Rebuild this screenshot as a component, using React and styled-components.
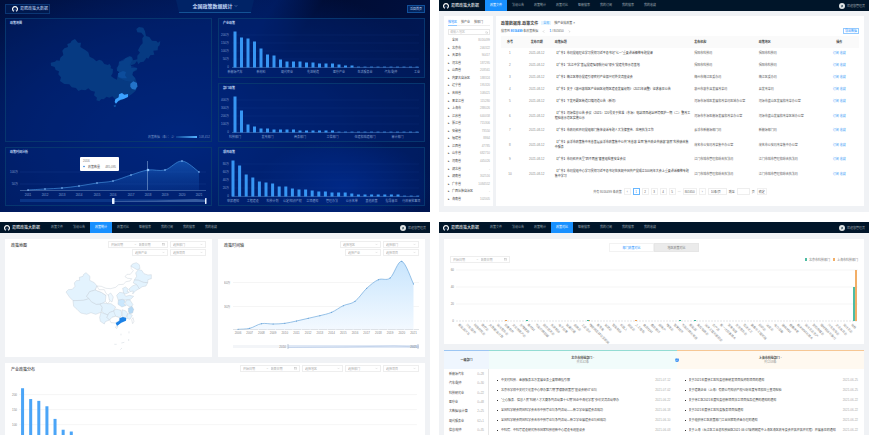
import React, { useState } from 'react';
import styled, { createGlobalStyle } from 'styled-components';
import { ChevronDown, ChevronLeft, ChevronRight, Calendar, Search } from 'lucide-react';

const navItems = ['政策文件', '法规公告', '政策统计', '政策对比', '智能搜索', '我的订阅', '我的搜索', '我的收藏'];

const regions = [
    ['全国', '8016499'], ['北京市', '246322'], ['天津市', '90417'], ['河北省', '187295'],
    ['山西省', '203561'], ['内蒙古自治区', '188324'], ['辽宁省', '195320'], ['吉林省', '108421'],
    ['黑龙江省', '115280'], ['上海市', '288026'], ['江苏省', '640058'], ['浙江省', '715306'],
    ['安徽省', '73550'], ['福建省', '8864'], ['江西省', '47785'], ['山东省', '682710'],
    ['河南省', '445026'], ['湖北省', '-'], ['湖南省', '302516'], ['广东省', '1084552'],
    ['广西壮族自治区', '-'], ['海南省', '102005'],
];

const policies = [
    ['【广东】市局党组理论学习贯彻习近平总书记“七一”重要讲话精神专题党课', '揭阳市科技局', '揭阳市科技局'],
    ['【广东】“北江中学”基层党建强领航行动“领头”党建先锋示范基地', '揭阳市科技局', '揭阳市科技局'],
    ['【广东】梅江区举办党建引领农村产业振兴对外交流座谈会', '梅州市梅江区委办局', '梅江区委办局'],
    ['【广东】关于《惠州惠城区产业园区规划区建设发展规划》（2021年调整）征求意见公告', '惠州市惠东县发展改革局', '县发改革局'],
    ['【广东】下发丹霞区街道口镇河道公告（新河）', '河源市源城区发展和改革局区域办公室', '河源市蓝山区发展和改革办公室'],
    ['【广东】河源信息公告 会议（2021）120号关于批准（东源）电站项目选址环境保护一期（二）整改工程验收示范区实施公示', '河源市东源区能源发展和改革办公室', '河源市蓝山发展和改革区域办公室'],
    ['【广东】市政局召开局党组部门集体谈话专题人大法律宣传、应用执法工作', '云浮市新能源部门局', '新能源部门局'],
    ['【广东】云浮市政策集中改善基层云浮市政策集中公共“改善惠 全面”集中政企共融惠“惠民”科技融合集中服务', '茂名市公安局改革集中办公室', '茂名市公安局改革集中办公室'],
    ['【广东】市局召开天里“四不两直”督查组检查安全会议', '江门市城市管理和综合执法局', '江门市城市管理和综合执法局'],
    ['【广东】市局党组中心学习贯彻习近平总书记在庆祝中国共产党成立100周年大会上重要讲话精神专题集中学习', '江门市城市管理和综合执法局', '江门市城市管理和综合执法局'],
];

const industries = [
    ['新能源汽车', '0+28'], ['汽车/配件', '0+30'], ['科技研究业', '0+22'], ['医疗业', '0+48'],
    ['大数据/云计算', '2+25'], ['现代服务业', '62+1'], ['信息/软件', '0+35'],
];

const beijing = [
    ['中关村科技、金融服务北方发展业务重要联络指引解', '2021-07-12'],
    ['北京市学校中关村文化基中心举办第六期“罗德斯政策官”座谈会研讨”论坛', '2021-07-02'],
    ['“重心服务、信息人民”科研人才大赛系列活动第十七期“国企中海化学者”参访交流活动举办', '2021-06-22'],
    ['全国科学研会同国科学会合市中技厅论坛系列活动——新华学业展建会活成功', '2021-06-18'],
    ['全国科学研会同国科学会合市中技厅论坛系列活动—新华学业展建会论坛经成功', '2021-06-10'],
    ['中科院、中科厅建设研究所市国家科技创新中心建设专题座谈会', '2021-06-03'],
];

const shanghai = [
    ['关于2021年度徐汇区科委创新研发项目拟资助项目的通知', '2021-06-25'],
    ['关于建筑企业（上海）有限公司知识产权纠纷年度专项和应重查询检验', '2021-06-25'],
    ['关于徐汇区2021年度科委创新项目扶立项目拟及运费的通知的通知', '2021-06-22'],
    ['关于2021年度徐汇区科委服务项目拟通知', '2021-06-22'],
    ['关于组织徐汇区政策部门工业国家助资金办理的通知', '2021-06-22'],
    ['关于上海（长江区工业总科技园区2021·06·07采购网建中上海区海区政专委会开拓开拓开究程）开展意见的通知', '2021-06-22'],
];

const industryBars = [36, 30, 29, 26, 19, 13, 12, 8, 6, 6, 6, 5, 5, 4, 4, 4, 3, 2, 2, 1, 1, 1, 1, 1, 1, 1, 1, 1, 1];
const deptBars = [36, 22, 8, 6, 4, 4, 3, 3, 3, 3, 2, 2, 2, 2, 2, 2, 1, 1, 1, 1, 1, 1, 1, 1, 1, 1, 1, 1, 1];
const topicBars = [36, 31, 22, 19, 15, 14, 13, 10, 10, 8, 7, 7, 6, 5, 5, 4, 4, 4, 3, 2, 2, 2, 2, 2, 2, 2, 1, 1, 1];

const compareLabels = [
    '新能源汽车', '汽车/配件', '科技研究业', '医疗业', '大数据/云计算', '现代服务业', '信息软件', '文化创意产业', '生物医药', '新材料',
    '节能环保低碳', '航空航天业', '先进制造', '电子信息', '轨道交通', '金融业', '工业设计', '物联网及移动互联网', '新零售', '旅游业',
    '智能制造', '机器人', '航运业', '人工智能', '食品饮料', '教育培训', '房地产', '物流业', '智慧城市', '节能环保与资源',
    '新能源', '集成电路业', '海洋工程与船舶业', '农产品', '新一代信息技术', '家用电器', '生活服务业', '石油化工', '装备与工程机械', '纺织业',
    '冶金业', '电力设备', '建筑材料', '健康养老', '纳米材料与技术', '现代农业生产', '影视传媒业', '增材制造与激光', '汽车充电业', '文化体育业', '现代农业', '其他',
];

// smooth curve through the points
function curve(points) {
    let d = `M${points[0][0]} ${points[0][1]}`;
    for (let i = 0; i < points.length - 1; i++) {
        const a = points[i - 1] || points[i];
        const b = points[i];
        const c = points[i + 1];
        const e = points[i + 2] || c;
        d += `C${b[0] + (c[0] - a[0]) / 6} ${b[1] + (c[1] - a[1]) / 6} ${c[0] - (e[0] - b[0]) / 6} ${c[1] - (e[1] - b[1]) / 6} ${c[0]} ${c[1]}`;
    }
    return d;
}

function Logo() {
    return (
        <LogoIcon viewBox="0 0 18 18" aria-hidden="true">
            <path d="M5 16C-1 10 2 2 9 2s10 8 4 14" fill="none" stroke="#fff" strokeWidth="3.5" />
            <path d="M9 9v5" stroke="#5d86c4" strokeWidth="2" />
        </LogoIcon>
    );
}

function NavBar({ active }) {
    return (
        <Nav>
            <Brand>
                <Logo />
                易聘政策大数据
            </Brand>
            <NavList>
                {navItems.map((item, i) => (
                    <NavLink key={item} href="#" $active={i === active}>{item}</NavLink>
                ))}
            </NavList>
            <User>
                <Avatar viewBox="0 0 12 12" aria-hidden="true">
                    <circle cx="6" cy="6" r="6" fill="#dfe3e4" />
                    <path d="M4 5l4-1v3l-3 2z" fill="#4d6572" />
                </Avatar>
                欢迎您管理员
            </User>
        </Nav>
    );
}

function DateRange() {
    return (
        <DateBox>
            <input aria-label="开始日期" placeholder="开始日期" />
            <span>~</span>
            <input aria-label="结束日期" placeholder="结束日期" />
            <Calendar size={3} />
        </DateBox>
    );
}

function Filter({ text, wide }) {
    return (
        <SelectBox $wide={wide}>
            <select aria-label={text}>
                <option>{text}</option>
            </select>
            <ChevronDown size={3} />
        </SelectBox>
    );
}

function DarkBars({ title, bars, start, pitch, step, ticks, labels }) {
    return (
        <DarkCard>
            <DarkTitle>{title}</DarkTitle>
            <Chart viewBox="0 0 205 51">
                {ticks.map((t, i) => (
                    <g key={i}>
                        <line x1="13" x2="200" y1={10 + i * 8} y2={10 + i * 8} stroke="#1b4797" strokeWidth=".3" opacity=".6" />
                        <text x="10" y={11 + i * 8} textAnchor="end" fill="#7f9cce">{t}</text>
                    </g>
                ))}
                <line x1="13" x2="200" y1="42.5" y2="42.5" stroke="#547dbb" strokeWidth=".5" />
                {bars.map((h, i) => (
                    <rect key={i} x={start + i * pitch - 1.5} y={42.5 - h} width="3" height={h} fill="#3796f3" opacity={h < 2 ? 0.65 : 1} />
                ))}
                {labels.map((l, i) => (
                    <text key={i} x={start + i * step * pitch} y="48" textAnchor="middle" fill="#86a2d1">{l}</text>
                ))}
            </Chart>
        </DarkCard>
    );
}

const darkPoints = [[22, 36], [39, 35], [56, 34], [73, 32], [91, 29], [107, 27], [125, 21], [142, 16], [159, 16], [176, 7], [193, 18]];

function DarkTrend() {
    return (
        <DarkCard>
            <DarkTitle>政策时间分析</DarkTitle>
            <Chart viewBox="0 0 205 51">
                <defs>
                    <linearGradient id="darkArea" x1="0" y1="0" x2="0" y2="1">
                        <stop offset="0" stopColor="#2074d8" stopOpacity=".5" />
                        <stop offset="1" stopColor="#1456b8" stopOpacity=".2" />
                    </linearGradient>
                </defs>
                <text x="12" y="19" textAnchor="end" fill="#7f9cce">100万</text>
                <text x="12" y="31" textAnchor="end" fill="#7f9cce">50万</text>
                <path d="M14 18H200M14 30H200" stroke="#1b4797" strokeWidth=".3" />
                <path d={`${curve(darkPoints)}L193 36L22 36Z`} fill="url(#darkArea)" />
                <path d={curve(darkPoints)} fill="none" stroke="#4b9ce8" strokeWidth=".6" />
                <path d="M14 36.5H200" stroke="#6e94c7" strokeWidth=".5" />
                <path d="M141.5 7V36" stroke="#9abbe3" strokeWidth=".5" />
                {darkPoints.map(([x, y], i) => <circle key={x} cx={x} cy={y} r={i === 7 ? 1.3 : 0.8} fill="#8fc5ff" />)}
                {darkPoints.map(([x], i) => <text key={x} x={x} y="42" textAnchor="middle" fill="#86a2d1">{2011 + i}</text>)}
                <rect x="14" y="45" width="186" height="3" fill="#0b3586" />
                <path d="M107 48V47L150 46.5L190 45L200 46V48Z" fill="#365b9f" />
                <rect x="106" y="44" width="2.5" height="6" rx=".4" fill="#e8f1ff" />
                <rect x="199" y="44" width="1.5" height="6" rx=".4" fill="#e8f1ff" />
                <rect x="74" y="3" width="39" height="14" rx="1" fill="#fff" />
                <text x="77" y="8" fill="#777">2016</text>
                <circle cx="78" cy="12.5" r=".8" fill="#217de1" />
                <text x="82" y="13.5" fill="#555">政策数量</text>
                <text x="110" y="13.5" textAnchor="end" fill="#777">485,095</text>
            </Chart>
        </DarkCard>
    );
}

function DarkMap() {
    return (
        <DarkCard $tall>
            <DarkTitle>政策地图</DarkTitle>
            <Chart viewBox="0 0 205 116">
                <defs>
                    <linearGradient id="scale">
                        <stop offset="0" stopColor="#0b3f8f" />
                        <stop offset="1" stopColor="#55b2ff" />
                    </linearGradient>
                </defs>
                <g transform="translate(-6 -25) scale(.3333)">
                    <path
                        fill="#063a82"
                        d="M152 188L165 185 170 181 179 182 181 173 190 165 187 152 193 145 204 141 202 132 211 129 215 122 225 117 234 128 243 128 241 141 257 151 265 157 269 170 281 176 289 184 298 179 306 182 313 192 324 195 328 191 333 199 332 205 339 207 338 220 333 228 342 235 351 239 353 224 358 216 351 212 350 203 358 194 357 185 370 182 377 174 389 168 396 171 400 181 412 178 412 167 420 158 414 151 421 137 428 130 427 115 432 108 424 98 412 97 409 87 417 81 430 83 435 94 438 108 448 111 456 122 469 123 474 128 481 123 479 136 474 140 473 151 460 152 463 164 451 166 445 176 440 173 431 185 421 187 415 193 411 183 404 192 393 196 394 204 412 204 411 210 399 216 397 225 406 235 411 249 413 259 407 272 396 282 384 290 365 300 353 305 345 297 337 289 328 293 320 290 311 298 304 297 298 304 289 301 291 293 282 286 285 275 273 272 265 265 256 271 244 269 235 273 228 264 215 262 208 253 193 252 180 243 183 232 175 223 177 214 167 210 164 201 153 197Z"
                    />
                    <path fill="#0d4a95" d="M357 185L377 174 394 170 396 182 389 196 412 204 399 216 397 225 406 235 400 245 378 243 353 232 358 216 351 212Z" opacity=".4" />
                    <path fill="#0d4d9c" d="M354 220L369 213 378 216 375 226 381 235 366 235 355 231Z" />
                    <path fill="#2373c9" d="M391 251L400 244 411 249 412 259 406 269 396 267 391 260Z" />
                    <path fill="#3ba1ff" d="M346 298L356 292 357 283 366 279 373 284 384 282 384 291 371 297 362 299 355 303 348 311 344 306Z" />
                    <path fill="#0d4d9c" d="M341 316L348 314 347 321 342 321Z" />
                </g>
                <text x="142" y="113" fill="#6e8cc0">政策数据（条）： 少</text>
                <rect x="170" y="111" width="21" height="2" fill="url(#scale)" />
                <text x="193" y="113" fill="#6e8cc0">108,452</text>
            </Chart>
        </DarkCard>
    );
}

function Dashboard() {
    return (
        <DarkScreen>
            <DarkHeader>
                <DarkBrand><Logo />易聘政策大数据</DarkBrand>
                <DarkHeading>全国政策数据统计 <ChevronDown size={4} /></DarkHeading>
                <HomeButton>返回首页</HomeButton>
            </DarkHeader>
            <DarkGrid>
                <DarkMap />
                <DarkBars
                    title="产业政策" bars={industryBars} start={16} pitch={6.5} step={4}
                    ticks={['200万', '150万', '100万', '50万', '0']}
                    labels={['新能源汽车', '新材料', '现代农业', '先进制造', '医疗产业', '生活服务业', '汽车/配件', '工业']}
                />
                <DarkBars
                    title="部门政策" bars={deptBars} start={16} pitch={6.5} step={5}
                    ticks={['400万', '300万', '200万', '100万', '0']}
                    labels={['科技部门', '发改部门', '商务部门', '工信部门', '住建和城建部门', '审计部门']}
                />
                <DarkTrend />
                <DarkBars
                    title="项目政策" bars={topicBars} start={14} pitch={6.6} step={3}
                    ticks={['80万', '60万', '40万', '20万', '0']}
                    labels={['申报通知', '工程建设', '科技计划', '认定/知识产权', '立项通知', '管理办法', '公示名单', '其他政策', '指导意见', '行政审批事项']}
                />
            </DarkGrid>
        </DarkScreen>
    );
}

function PolicyLibrary() {
    const [tab, setTab] = useState('按地区');
    return (
        <Screen>
            <NavBar active={0} />
            <LibraryBody>
                <Sidebar>
                    <SideTabs>
                        {['按地区', '按产业', '按部门'].map((t) => (
                            <SideTab key={t} $active={t === tab} onClick={() => setTab(t)}>{t}</SideTab>
                        ))}
                    </SideTabs>
                    <SearchBox>
                        <input aria-label="地区" placeholder="请输入地区" />
                        <Search size={3} />
                    </SearchBox>
                    <RegionList>
                        {regions.map(([name, count], i) => (
                            <li key={name}>
                                <i>{i > 0 && '▸'}</i>
                                <span>{name}</span>
                                <small>{count}</small>
                            </li>
                        ))}
                    </RegionList>
                </Sidebar>
                <LibraryMain>
                    <LibraryHead>
                        <h2>政策数据库-政策文件</h2>
                        <Tag>全部</Tag>
                        <span>按产业找政策 ×</span>
                    </LibraryHead>
                    <ResultRow>
                        <p>搜索到 <b>8016499</b> 条政策数据</p>
                        <ChevronLeft size={3} />
                        <p><b>1</b> / 801650</p>
                        <ChevronRight size={3} />
                        <ExportButton>导出数据</ExportButton>
                    </ResultRow>
                    <Table>
                        <colgroup>
                            <col width="5%" /><col width="10%" /><col width="39%" /><col width="18%" /><col width="17%" /><col width="11%" />
                        </colgroup>
                        <thead>
                            <tr><th>序号</th><th>发布日期</th><th>政策标题</th><th>发布机构</th><th>政策地区</th><th>操作</th></tr>
                        </thead>
                        <tbody>
                            {policies.map(([name, org, area], i) => (
                                <tr key={name}>
                                    <td>{i + 1}</td>
                                    <td>2021-08-12</td>
                                    <td>{name}</td>
                                    <td>{org}</td>
                                    <td>{area}</td>
                                    <td><a href="#">订阅</a> <a href="#">收藏</a></td>
                                </tr>
                            ))}
                        </tbody>
                    </Table>
                    <Pager>
                        <span>共有 8016499 条政策</span>
                        <PageButton aria-label="上一页">‹</PageButton>
                        {[1, 2, 3, 4, 5].map((n) => <PageButton key={n} $active={n === 1}>{n}</PageButton>)}
                        <span>···</span>
                        <PageButton>801650</PageButton>
                        <PageButton aria-label="下一页">›</PageButton>
                        <PageSelect aria-label="每页条数"><option>10条/页</option></PageSelect>
                        <label htmlFor="jump">跳至</label>
                        <PageInput id="jump" />
                        <span>页</span>
                        <PageButton>确定</PageButton>
                    </Pager>
                </LibraryMain>
            </LibraryBody>
        </Screen>
    );
}

function LightMap() {
    return (
        <Chart viewBox="0 0 195 101">
            <g transform="translate(-11 -39) scale(.3333)" stroke="#c1cbd3" strokeWidth="1.2" strokeLinejoin="round" fill="#e3f3fe">
                <path fill="none" d="M290 207L304 208 318 214 332 215 347 211 356 203 370 202 378 194 390 192 395 185 383 184 375 179 381 172 391 172 400 161 394 155 393 145" />
                <path d="M393 148L397 141 409 137 418 143 420 155 411 158 402 153Z" />
                <path d="M415 158L425 160 432 170 444 174 454 173 454 185 444 188 443 197 429 196 416 190 403 189 410 178 407 168Z" />
                <path d="M403 189L416 190 429 196 443 197 438 207 427 209 418 215 409 202 400 198Z" />
                <path d="M387 216L397 207 409 202 418 215 407 221 398 231 400 222 390 224Z" />
                <path d="M198 225L205 218 217 217 225 208 223 198 229 191 239 190 238 181 249 178 251 172 258 167 270 178 269 190 283 197 291 207 286 219 269 224 260 238 267 245 251 250 219 251 209 241Z" />
                <path d="M219 251L251 250 267 245 274 254 289 262 300 261 307 271 303 286 287 292 273 287 260 292 242 288 231 277 221 268Z" />
                <path d="M260 238L269 224 286 219 304 226 318 235 323 247 310 258 300 261 289 262 274 254 267 245Z" />
                <path fill="#fff" d="M291 207L297 218 313 218 318 229 330 240 330 252 323 260 316 253 318 235 304 226 286 219Z" />
                <path d="M325 233L332 228 340 240 336 255 328 249Z" fill="#eef8ff" />
                <path d="M300 261L310 258 323 260 333 260 347 270 341 282 328 287 324 294 313 290 305 283 307 271Z" />
                <path d="M303 286L313 290 324 294 321 301 329 309 316 314 313 321 301 313 299 301Z" />
                <path d="M324 294L328 287 341 282 348 286 347 298 336 301 329 309 321 301Z" />
                <path d="M341 282L348 276 363 280 366 294 359 302 347 298Z" />
                <path fill="#fff" d="M329 309L336 301 347 298 359 302 357 312 345 318 333 317Z" />
                <path d="M366 278L378 282 383 290 378 302 367 300Z" />
                <path d="M383 290L389 290 397 295 390 307 381 304Z" />
                <path d="M368 214L377 210 385 217 381 223 388 226 377 231 371 228Z" />
                <path d="M350 235L359 226 371 228 377 238 389 235 401 238 392 247 379 249 367 247 355 250Z" />
                <path fill="#cae7fd" d="M355 250L367 247 376 252 372 260 379 265 366 270 354 262Z" />
                <path d="M379 249L390 249 399 263 393 270 384 267 376 258Z" />
                <path fill="#b5d9f5" d="M385 274L396 268 401 277 398 288 389 290 385 284Z" />
                <path fill="#1d82e6" stroke="none" d="M347 318L358 311 359 303 369 300 379 303 378 311 364 317 351 327Z" />
                <path d="M395 308L399 302 402 313 398 320ZM346 330L354 328 350 335Z" fill="#fff" />
                <path fill="none" d="M363 350v5M387 343v6M343 382h7M364 378l9-2M361 398l5-5M386 366v6" />
            </g>
        </Chart>
    );
}

const trendY = [337, 334, 320, 321, 319, 312, 304, 296, 286, 266, 253, 214, 188, 183, 133, 201];
const trendPoints = trendY.map((y, i) => [14 + i * 11.7, y / 3 - 39]);

function LightTrend() {
    return (
        <Chart viewBox="0 0 195 101">
            <defs>
                <linearGradient id="lightArea" x1="0" y1="0" x2="0" y2="1">
                    <stop offset="0" stopColor="#c8e5fd" />
                    <stop offset="1" stopColor="#f3f9ff" />
                </linearGradient>
            </defs>
            <path d="M9 26.5H195M9 50.5H195" stroke="#ebebeb" strokeWidth=".5" />
            <text x="0" y="28" fill="#888">60万</text>
            <text x="0" y="52" fill="#888">30万</text>
            <path d={`${curve(trendPoints)}V73.5H14Z`} fill="url(#lightArea)" />
            <path d={curve(trendPoints)} fill="none" stroke="#6fa9dc" strokeWidth=".7" />
            <path d="M9 73.5H195" stroke="#c3c8ce" strokeWidth=".5" strokeDasharray="8 .6" />
            {trendPoints.map(([x, y], i) => (
                <g key={x}>
                    <circle cx={x} cy={y} r=".5" fill="#4a8fd0" />
                    <text x={x} y="78" textAnchor="middle" fill="#888">{2006 + i}</text>
                </g>
            ))}
            <rect x="9" y="89" width="186" height="3" fill="#f3f5f8" />
            <path d="M64 89H195V92H64Z" fill="#dfe8f5" />
            <path d="M64 91.5L120 91L170 90L195 91" fill="none" stroke="#b3c8e5" strokeWidth=".6" />
            <path d="M64 88V93M194 88V93" stroke="#a4b2c8" strokeWidth=".7" />
            <text x="62" y="92" textAnchor="end" fill="#888">2010</text>
            <text x="193" y="92" textAnchor="end" fill="#888">2021</text>
        </Chart>
    );
}

function Statistics() {
    return (
        <Screen>
            <NavBar active={2} />
            <StatsBody>
                <Card>
                    <CardHead>
                        <h2>政策地图</h2>
                        <Filters>
                            <DateRange /><Filter text="选择部门" />
                            <Filter text="选择产业" /><Filter text="选择项目" />
                        </Filters>
                    </CardHead>
                    <LightMap />
                </Card>
                <Card>
                    <CardHead>
                        <h2>政策时间轴</h2>
                        <Filters $narrow>
                            <Filter text="选择地区" wide /><Filter text="选择部门" />
                            <Filter text="选择产业" /><Filter text="选择项目" />
                        </Filters>
                    </CardHead>
                    <LightTrend />
                </Card>
                <Card $full>
                    <CardHead>
                        <h2>产业政策分布</h2>
                        <FilterRow>
                            <DateRange />
                            <Filter text="选择地区" wide /><Filter text="选择部门" /><Filter text="选择项目" />
                        </FilterRow>
                    </CardHead>
                    <Chart viewBox="0 0 407 62">
                        {['200', '150', '100'].map((t, i) => (
                            <g key={t}>
                                <line x1="8" x2="405" y1={21.5 + i * 15} y2={21.5 + i * 15} stroke="#ececec" strokeWidth=".5" />
                                <text x="6" y={22.5 + i * 15} textAnchor="end" fill="#888">{t}</text>
                            </g>
                        ))}
                        {industryBars.slice(0, 7).map((h, i) => {
                            const top = 80 - h * 1.8;
                            return <rect key={i} x={10 + i * 8.1} y={top} width="3" height={62 - top} fill="#4ba5f7" />;
                        })}
                    </Chart>
                </Card>
            </StatsBody>
        </Screen>
    );
}

function CompareChart() {
    return (
        <Chart viewBox="0 0 408 80">
            {['60', '40', '20', '0'].map((t, i) => (
                <g key={t}>
                    <line x1="6" x2="408" y1={6 + i * 17} y2={6 + i * 17} stroke={i === 3 ? '#c5c9ce' : '#eaeaea'} strokeWidth=".5" strokeDasharray={i === 3 ? '2 1' : 'none'} />
                    <text x="4" y={7 + i * 17} textAnchor="end" fill="#888">{t}</text>
                </g>
            ))}
            {compareLabels.map((l, i) => {
                const x = 8 + i * 7.7;
                return <text key={l} transform={`translate(${x} 61) rotate(45)`} fill="#888">{l}</text>;
            })}
            <path fill="#ef9e4e" d="M55 56h2v1h-2zM139 56h1v1h-1zM185 56h2v1h-2z" />
            <path fill="#37b79b" d="M76 56h2v1h-2zM137 56h2v1h-2zM229 56h2v1h-2zM244 56h2v1h-2z" />
            <rect x="403" y="23" width="2" height="34" fill="#4dbca3" />
            <rect x="405" y="6" width="2" height="51" fill="#f2ae67" />
        </Chart>
    );
}

function NewsList({ items }) {
    return (
        <News>
            {items.map(([text, date]) => (
                <li key={text}>
                    <i />
                    <a href="#">{text}</a>
                    <time>{date}</time>
                </li>
            ))}
        </News>
    );
}

function Compare() {
    const [tab, setTab] = useState(0);
    return (
        <Screen>
            <NavBar active={3} />
            <CompareBody>
                <Card>
                    <Switcher>
                        {['部门政策对比', '地区政策对比'].map((t, i) => (
                            <SwitchButton key={t} $active={tab === i} onClick={() => setTab(i)}>{t}</SwitchButton>
                        ))}
                    </Switcher>
                    <CompareTools>
                        <DateRange />
                        <Legend>
                            <LegendItem $color="#4dbca3">北京市科技部门</LegendItem>
                            <LegendItem $color="#f2ae67">上海市科技部门</LegendItem>
                        </Legend>
                    </CompareTools>
                    <CompareChart />
                </Card>
                <Columns>
                    <ColumnHead $line="#9cc6f3" $back="#eff6fe"><b>一级部门</b></ColumnHead>
                    <ColumnHead $line="#93dcd3" $back="#f1fcfb">
                        <b>北京市科技部门 ·</b>
                        <small>共3142条</small>
                        <VsBadge>⇄</VsBadge>
                    </ColumnHead>
                    <ColumnHead $line="#f6c795" $back="#fff9f0">
                        <b>上海市科技部门 ·</b>
                        <small>共1208条</small>
                    </ColumnHead>
                    <IndustryList>
                        {industries.map(([name, n]) => <li key={name}>{name}<small>{n}</small></li>)}
                    </IndustryList>
                    <NewsList items={beijing} />
                    <NewsList items={shanghai} />
                </Columns>
            </CompareBody>
        </Screen>
    );
}

export default function App() {
    return (
        <Page>
            <GlobalStyle />
            <Dashboard />
            <PolicyLibrary />
            <Statistics />
            <Compare />
        </Page>
    );
}

const GlobalStyle = createGlobalStyle`
    * {
        box-sizing: border-box;
        margin: 0;
        padding: 0;
    }
    body {
        background: #fff;
        color: #444;
        font: 3px/4px "Liberation Sans", "Noto Sans CJK SC", sans-serif;
    }
    button, input, select {
        font: inherit;
        color: inherit;
        border: 0;
        background: none;
        border-radius: 0;
        outline: 0;
        min-width: 0;
    }
    select {
        appearance: none;
    }
    button {
        cursor: pointer;
    }
    a {
        color: inherit;
        text-decoration: none;
    }
    ul {
        list-style: none;
    }
    small {
        font-size: 3px;
    }
    i {
        font-style: normal;
    }
    svg {
        flex: none;
    }
`;
const Page = styled.main`
    display: grid;
    grid-template-columns: repeat(2, minmax(0, 1fr));
    align-items: start;
    gap: 10px 9px;
`;
const Chart = styled.svg`
    display: block;
    width: 100%;
    height: auto;
    font-size: 3px;
`;
const LogoIcon = styled.svg`
    width: 6px;
    height: 6px;
`;

const DarkScreen = styled.section`
    background:
        radial-gradient(ellipse at 80% 88%, rgba(0, 66, 210, 0.4), transparent 18%),
        radial-gradient(ellipse at 42% 65%, #002680, rgba(0, 32, 112, 0.8) 45%, transparent 85%),
        linear-gradient(125deg, #000f3c, #001a5c 48%, #000c33 56%, #00144c);
    color: #c3d8f7;
    padding: 0 5px 6px;
`;
const DarkHeader = styled.header`
    display: grid;
    grid-template-columns: 1fr 78px 1fr;
    height: 18px;
    align-items: start;
`;
const DarkBrand = styled.div`
    display: flex;
    align-items: center;
    justify-self: start;
    gap: 2px;
    margin-top: 4px;
    width: 45px;
    height: 10px;
    padding-left: 6px;
    border: 1px solid #0b3674;
    background: #00194f;
    font-size: 4px;
    white-space: nowrap;
`;
const DarkHeading = styled.h1`
    display: flex;
    align-items: center;
    justify-content: center;
    gap: 1px;
    height: 13px;
    background: #002366;
    border-bottom: 1px solid #145295;
    clip-path: polygon(0 0, 100% 0, 96% 100%, 4% 100%);
    font-size: 5px;
    line-height: 6px;
    white-space: nowrap;
`;
const HomeButton = styled.button`
    justify-self: end;
    margin-top: 5px;
    width: 18px;
    height: 8px;
    border: 1px solid #12509a;
    background: #03255f;
    line-height: 4px;
    white-space: nowrap;
`;
const DarkGrid = styled.div`
    display: grid;
    grid-template-columns: repeat(2, minmax(0, 1fr));
    gap: 5px 6px;
`;
const DarkCard = styled.section`
    grid-row: ${props => props.$tall ? 'span 2' : 'auto'};
    background: rgba(0, 36, 120, 0.35);
    border: 1px solid #07366f;
`;
const DarkTitle = styled.h2`
    padding: 2px 4px 0;
    height: 6px;
    font-size: 3px;
    line-height: 4px;
`;

const Screen = styled.section`
    background: #f0f2f5;
`;
const Nav = styled.header`
    display: flex;
    height: 11px;
    background: #001529;
    color: #fff;
    white-space: nowrap;
`;
const Brand = styled.div`
    display: flex;
    align-items: center;
    gap: 2px;
    width: 46px;
    padding-left: 4px;
    font-size: 4px;
`;
const NavList = styled.nav`
    display: flex;
    flex: 1;
`;
const NavLink = styled.a`
    width: 22px;
    line-height: 11px;
    text-align: center;
    color: ${props => props.$active ? '#fff' : '#9fa8b1'};
    background: ${props => props.$active ? '#1890ff' : 'transparent'};
`;
const User = styled.div`
    display: flex;
    align-items: center;
    gap: 2px;
    padding-right: 4px;
    color: #a5adb5;
`;
const Avatar = styled.svg`
    width: 6px;
    height: 6px;
`;

const LibraryBody = styled.div`
    display: grid;
    grid-template-columns: 49px minmax(0, 1fr);
    gap: 3px;
    padding: 5px 5px 6px;
`;
const Sidebar = styled.aside`
    display: flex;
    flex-direction: column;
    background: #fff;
    padding: 3px 3px 5px 4px;
`;
const SideTabs = styled.div`
    display: flex;
    gap: 4px;
    border-bottom: 1px solid #eee;
`;
const SideTab = styled.button`
    height: 6px;
    color: ${props => props.$active ? '#1890ff' : '#555'};
    box-shadow: ${props => props.$active ? '0 1px #8fc8ff' : 'none'};
`;
const SearchBox = styled.label`
    display: flex;
    align-items: center;
    margin-top: 3px;
    height: 6px;
    padding: 0 1px;
    border: 1px solid #e8e8e8;
    color: #aaa;
    input {
        flex: 1;
    }
    input::placeholder {
        color: #bbb;
    }
`;
const RegionList = styled.ul`
    flex: 1;
    display: flex;
    flex-direction: column;
    justify-content: space-between;
    padding-top: 3px;
    li {
        display: flex;
        white-space: nowrap;
    }
    i {
        width: 4px;
    }
    span {
        flex: 1;
    }
    small {
        color: #aaa;
    }
`;
const LibraryMain = styled.section`
    background: #fff;
    padding: 4px 5px 11px;
`;
const LibraryHead = styled.div`
    display: flex;
    align-items: center;
    gap: 3px;
    height: 6px;
    h2 {
        font-size: 4px;
        line-height: 5px;
    }
`;
const Tag = styled.span`
    padding: 0 2px;
    background: #e6f5ff;
    color: #53aaf8;
`;
const ResultRow = styled.div`
    display: flex;
    align-items: center;
    gap: 4px;
    height: 10px;
    color: #666;
    b {
        color: #1890ff;
    }
`;
const ExportButton = styled.button`
    margin-left: auto;
    width: 16px;
    height: 6px;
    border: 1px solid #94caff;
    color: #1890ff;
    line-height: 4px;
`;
const Table = styled.table`
    width: 100%;
    table-layout: fixed;
    border-collapse: collapse;
    th {
        height: 12px;
        background: #fafafa;
        text-align: left;
    }
    td {
        padding: 3px 3px 4px 0;
        line-height: 5px;
        color: #555;
    }
    td:nth-child(3) {
        color: #333;
    }
    th:nth-child(-n + 2), td:nth-child(-n + 2), th:last-child, td:last-child {
        text-align: center;
        padding-right: 0;
    }
    td:nth-child(-n + 2) {
        color: #888;
    }
    a {
        color: #3d9cf7;
    }
`;
const Pager = styled.div`
    display: flex;
    align-items: center;
    justify-content: center;
    gap: 2px;
    margin-top: 5px;
    color: #666;
`;
const PageButton = styled.button`
    min-width: 7px;
    height: 7px;
    padding: 0 1px;
    border: 1px solid ${props => props.$active ? '#69b7ff' : '#f0f0f0'};
    color: ${props => props.$active ? '#1890ff' : '#666'};
    line-height: 4px;
`;
const PageSelect = styled.select`
    width: 19px;
    height: 7px;
    padding: 0 2px;
    border: 1px solid #eee;
`;
const PageInput = styled.input`
    width: 13px;
    height: 7px;
    border: 1px solid #eee;
`;

const StatsBody = styled.div`
    display: grid;
    grid-template-columns: repeat(2, minmax(0, 1fr));
    gap: 6px;
    padding: 6px 5px 0;
`;
const Card = styled.section`
    background: #fff;
    padding: 2px 6px 0;
    grid-column: ${props => props.$full ? '1 / -1' : 'auto'};
`;
const CardHead = styled.div`
    display: flex;
    justify-content: space-between;
    h2 {
        padding-top: 2px;
        font-size: 4px;
        line-height: 5px;
        font-weight: normal;
        color: #222;
    }
`;
const Filters = styled.div`
    display: grid;
    grid-template-columns: ${props => props.$narrow ? '41px' : '60px'} 36px;
    justify-items: end;
    gap: 1px 2px;
`;
const FilterRow = styled.div`
    display: flex;
    gap: 2px;
    height: 8px;
`;
const DateBox = styled.div`
    display: flex;
    align-items: center;
    width: 60px;
    height: 7px;
    padding: 0 2px;
    border: 1px solid #eee;
    color: #aaa;
    input {
        flex: 1;
    }
    input::placeholder {
        color: #aaa;
    }
    span {
        width: 4px;
    }
`;
const SelectBox = styled.label`
    display: flex;
    align-items: center;
    width: ${props => props.$wide ? '41px' : '36px'};
    height: 7px;
    padding: 0 2px;
    border: 1px solid #eee;
    color: #aaa;
    select {
        flex: 1;
    }
`;

const CompareBody = styled.div`
    padding: 6px 5px 0;
`;
const Switcher = styled.div`
    display: flex;
    justify-content: center;
    padding-top: 2px;
`;
const SwitchButton = styled.button`
    width: 45px;
    height: 9px;
    border: 1px solid ${props => props.$active ? '#f2f2f2' : '#e6e6e6'};
    background: ${props => props.$active ? '#fff' : '#ebebeb'};
    color: ${props => props.$active ? '#1890ff' : '#777'};
`;
const CompareTools = styled.div`
    display: flex;
    justify-content: space-between;
    padding: 4px 0 1px;
`;
const Legend = styled.div`
    display: flex;
    align-items: center;
    gap: 3px;
    color: #777;
`;
const LegendItem = styled.span`
    display: flex;
    align-items: center;
    gap: 2px;
    &::before {
        content: "";
        width: 2px;
        height: 3px;
        background: ${props => props.$color};
    }
`;
const Columns = styled.div`
    display: grid;
    grid-template-columns: 45px minmax(0, 1fr) minmax(0, 1fr);
    margin-top: 6px;
    background: #fff;
`;
const ColumnHead = styled.div`
    position: relative;
    display: flex;
    flex-direction: column;
    align-items: center;
    justify-content: center;
    height: 19px;
    border-top: 1px solid ${props => props.$line};
    background: ${props => props.$back};
    small {
        color: #999;
    }
`;
const VsBadge = styled.span`
    position: absolute;
    z-index: 1;
    right: -2px;
    width: 4px;
    height: 4px;
    border-radius: 50%;
    background: #2f8df3;
    color: #fff;
    text-align: center;
`;
const IndustryList = styled.ul`
    display: flex;
    flex-direction: column;
    padding: 0 4px 0 5px;
    border-right: 1px solid #e6e6e6;
    li {
        flex: 1;
        display: flex;
        align-items: center;
        justify-content: space-between;
    }
    small {
        color: #aaa;
    }
`;
const News = styled.ul`
    padding: 6px 6px 0 8px;
    li {
        display: flex;
        align-items: center;
        gap: 3px;
        height: 10px;
        white-space: nowrap;
    }
    i {
        width: 1px;
        height: 1px;
        background: #333;
    }
    a {
        flex: 1;
        overflow: hidden;
        text-overflow: ellipsis;
    }
    time {
        color: #aaa;
    }
`;
